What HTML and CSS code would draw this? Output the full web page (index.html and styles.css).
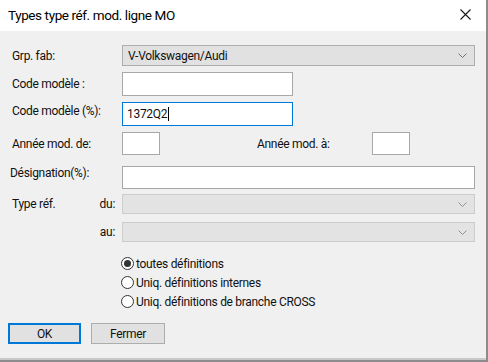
FILE: index.html
```html
<!DOCTYPE html>
<html lang="fr">
<head>
    <meta charset="UTF-8">
    <meta name="viewport" content="width=device-width, initial-scale=1.0">
    <title>Types type réf. mod. ligne MO</title>
    <link rel="stylesheet" href="styles.css">
</head>
<body>
    <div class="dialog">
        <div class="titlebar">
            <span class="title">Types type réf. mod. ligne MO</span>
            <svg class="close" width="11" height="11" viewBox="0 0 11 11">
                <path d="M0.5 0.5 L10.5 10.5 M10.5 0.5 L0.5 10.5" stroke="#1a1a1a" stroke-width="1.1" fill="none"/>
            </svg>
        </div>

        <div class="content">
            <div class="row row-grp">
                <span class="lbl">Grp. fab:</span>
                <div class="select wide">
                    <span>V-Volkswagen/Audi</span>
                    <svg class="chev" width="9" height="5" viewBox="0 0 9 5"><path d="M0.5 0.5 L4.5 4.5 L8.5 0.5" stroke="#707070" fill="none"/></svg>
                </div>
            </div>

            <div class="row row-code">
                <span class="lbl">Code modèle :</span>
                <div class="input mid"></div>
            </div>

            <div class="row row-code">
                <span class="lbl lbl-up">Code modèle (%):</span>
                <div class="input mid focus">1372Q2<span class="caret"></span></div>
            </div>

            <div class="row row-year">
                <span class="lbl">Année mod. de:</span>
                <div class="input small"></div>
                <span class="lbl lbl-to">Année mod. à:</span>
                <div class="input small"></div>
            </div>

            <div class="row row-desig">
                <span class="lbl lbl-desig">Désignation(%):</span>
                <div class="input wide"></div>
            </div>

            <div class="row row-type">
                <span class="lbl lbl-split"><span>Type réf.</span><span>du:</span></span>
                <div class="select wide disabled">
                    <span></span>
                    <svg class="chev" width="9" height="5" viewBox="0 0 9 5"><path d="M0.5 0.5 L4.5 4.5 L8.5 0.5" stroke="#909090" fill="none"/></svg>
                </div>
            </div>

            <div class="row row-type">
                <span class="lbl lbl-split"><span></span><span>au:</span></span>
                <div class="select wide disabled">
                    <span></span>
                    <svg class="chev" width="9" height="5" viewBox="0 0 9 5"><path d="M0.5 0.5 L4.5 4.5 L8.5 0.5" stroke="#909090" fill="none"/></svg>
                </div>
            </div>

            <div class="radios">
                <div class="radio-line"><span class="radio checked"></span>toutes définitions</div>
                <div class="radio-line"><span class="radio"></span>Uniq. définitions internes</div>
                <div class="radio-line"><span class="radio"></span>Uniq. définitions de branche CROSS</div>
            </div>

            <div class="buttons">
                <div class="btn default">OK</div>
                <div class="btn">Fermer</div>
            </div>
        </div>
    </div>
</body>
</html>
```

FILE: styles.css
```css
html, body {
    margin: 0;
    padding: 0;
}

body {
    width: 488px;
    height: 362px;
    background-color: #8c8c8c;
    font-family: Roboto, "Noto Sans", sans-serif;
    font-size: 12px;
    letter-spacing: -0.3px;
    color: #111;
    overflow: hidden;
}

.dialog {
    width: 486px;
    height: 358px;
    background-color: #f0f0f0;
    border-bottom: 2px solid #c8c8c8;
    box-sizing: content-box;
    display: flex;
    flex-direction: column;
}

.titlebar {
    height: 31px;
    background-color: #fff;
    display: flex;
    align-items: center;
    justify-content: space-between;
    padding: 0 15px 0 8px;
    flex-shrink: 0;
}

.title {
    font-size: 13.5px;
    letter-spacing: -0.4px;
    color: #000;
    margin-top: -1px;
}

.close {
    margin-top: -3px;
}

.content {
    padding: 14px 11px 0 12px;
    display: flex;
    flex-direction: column;
}

.row {
    display: flex;
    align-items: center;
}

.lbl {
    width: 110px;
    flex-shrink: 0;
}

.lbl-up {
    margin-top: -6px;
}

.row-grp {
    height: 21px;
    margin-bottom: 6px;
}

.row-code {
    height: 24px;
    margin-bottom: 6px;
}

.row-year {
    height: 23px;
    margin-bottom: 11px;
}

.row-desig {
    height: 23px;
    margin-bottom: 5px;
}

.lbl-desig {
    margin-left: -2px;
    width: 112px;
    margin-top: -10px;
}

.row-type {
    height: 20px;
    margin-bottom: 8px;
}

.lbl-split {
    display: flex;
    justify-content: space-between;
    padding-right: 7px;
    box-sizing: border-box;
}

.lbl-to {
    margin-left: 97px;
    width: 115px;
}

.input {
    height: 100%;
    box-sizing: border-box;
    background-color: #fff;
    border: 1px solid #a8a8a8;
    padding: 0 4px;
    display: flex;
    align-items: center;
}

.input.focus {
    border-color: #0078d7;
}

.caret {
    display: inline-block;
    width: 1px;
    height: 14px;
    background-color: #000;
    margin-left: 1px;
}

.wide {
    width: 353px;
}

.mid {
    width: 171px;
}

.small {
    width: 38px;
}

.select {
    height: 100%;
    box-sizing: border-box;
    background-color: #e1e1e1;
    border: 1px solid #adadad;
    display: flex;
    align-items: center;
    justify-content: space-between;
    padding: 0 7px 0 5px;
}

.select.disabled {
    background-color: #e3e3e3;
    border-color: #cccccc;
}

.radios {
    margin-top: 4px;
    margin-left: 109px;
    display: flex;
    flex-direction: column;
}

.radio-line {
    height: 19px;
    display: flex;
    align-items: center;
}

.radio {
    width: 13px;
    height: 13px;
    box-sizing: border-box;
    border: 1px solid #333;
    border-radius: 50%;
    background-color: #fff;
    margin-right: 2px;
    display: flex;
    align-items: center;
    justify-content: center;
}

.radio.checked::after {
    content: "";
    width: 7px;
    height: 7px;
    border-radius: 50%;
    background-color: #333;
}

.buttons {
    display: flex;
    gap: 10px;
    margin-top: 12px;
    margin-left: -4px;
}

.btn {
    width: 73px;
    height: 21px;
    box-sizing: border-box;
    background-color: #e1e1e1;
    border: 1px solid #adadad;
    display: flex;
    align-items: center;
    justify-content: center;
}

.btn.default {
    border-color: #0078d7;
    box-shadow: inset 0 0 0 1px #0078d7;
}

.btn + .btn {
    width: 74px;
}
```
